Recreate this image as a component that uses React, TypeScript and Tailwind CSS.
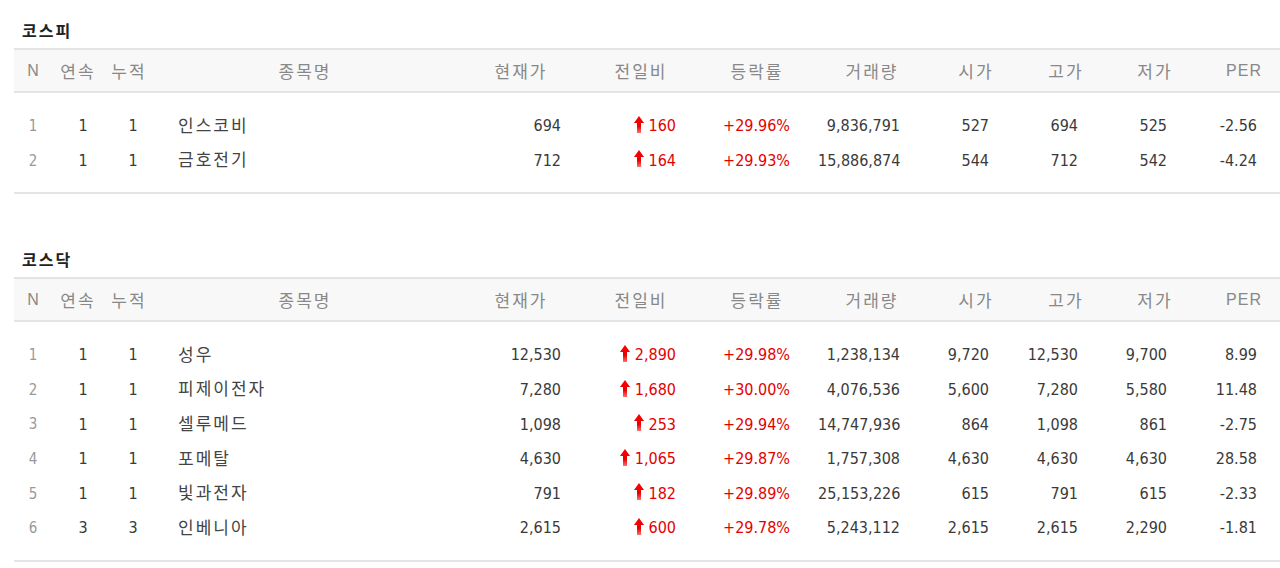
type Stock = {
  name: string;
  streak: number;
  total: number;
  price: string;
  diff: string;
  rate: string;
  volume: string;
  open: string;
  high: string;
  low: string;
  per: string;
};

const kospi: Stock[] = [
  { name: "인스코비", streak: 1, total: 1, price: "694", diff: "160", rate: "+29.96%", volume: "9,836,791", open: "527", high: "694", low: "525", per: "-2.56" },
  { name: "금호전기", streak: 1, total: 1, price: "712", diff: "164", rate: "+29.93%", volume: "15,886,874", open: "544", high: "712", low: "542", per: "-4.24" },
];

const kosdaq: Stock[] = [
  { name: "성우", streak: 1, total: 1, price: "12,530", diff: "2,890", rate: "+29.98%", volume: "1,238,134", open: "9,720", high: "12,530", low: "9,700", per: "8.99" },
  { name: "피제이전자", streak: 1, total: 1, price: "7,280", diff: "1,680", rate: "+30.00%", volume: "4,076,536", open: "5,600", high: "7,280", low: "5,580", per: "11.48" },
  { name: "셀루메드", streak: 1, total: 1, price: "1,098", diff: "253", rate: "+29.94%", volume: "14,747,936", open: "864", high: "1,098", low: "861", per: "-2.75" },
  { name: "포메탈", streak: 1, total: 1, price: "4,630", diff: "1,065", rate: "+29.87%", volume: "1,757,308", open: "4,630", high: "4,630", low: "4,630", per: "28.58" },
  { name: "빛과전자", streak: 1, total: 1, price: "791", diff: "182", rate: "+29.89%", volume: "25,153,226", open: "615", high: "791", low: "615", per: "-2.33" },
  { name: "인베니아", streak: 3, total: 3, price: "2,615", diff: "600", rate: "+29.78%", volume: "5,243,112", open: "2,615", high: "2,615", low: "2,290", per: "-1.81" },
];

const NUM = "font-['DejaVu_Sans_Condensed','DejaVu_Sans',sans-serif]";
const KOR = "font-['Noto_Sans_CJK_KR',sans-serif] tracking-[2px]";

function UpArrow() {
  return (
    <svg width="10" height="17" viewBox="0 0 10 17" className="mr-[5px] mb-[4px]">
      <defs>
        <linearGradient id="upg" x1="0" y1="0" x2="0" y2="1">
          <stop offset="0" stopColor="#ff0000" />
          <stop offset="0.6" stopColor="#e80000" />
          <stop offset="1" stopColor="#ff7070" />
        </linearGradient>
      </defs>
      <path d="M5 0 L10 7 L7 7 L7 17 L3 17 L3 7 L0 7 Z" fill="url(#upg)" />
    </svg>
  );
}

function HeaderRow() {
  return (
    <div className={`flex h-[45px] items-center border-y-2 border-[#e4e4e4] bg-[#f8f8f8] text-[17px] text-[#888] ${KOR}`}>
      <div className="w-[38px] text-center font-['Liberation_Sans',sans-serif] text-[16px] tracking-normal">N</div>
      <div className="w-[52px] text-center">연속</div>
      <div className="w-[50px] text-center">누적</div>
      <div className="w-[302px] text-center">종목명</div>
      <div className="w-[130px] text-center">현재가</div>
      <div className="w-[110px] text-center">전일비</div>
      <div className="w-[122px] text-center">등락률</div>
      <div className="w-[108px] text-center">거래량</div>
      <div className="w-[100px] text-center">시가</div>
      <div className="w-[80px] text-center">고가</div>
      <div className="w-[98px] text-center">저가</div>
      <div className="flex-1 pl-[4px] text-center font-['Liberation_Sans',sans-serif] text-[16px] tracking-[1px]">PER</div>
    </div>
  );
}

function DataRow({ n, s }: { n: number; s: Stock }) {
  return (
    <div className={`flex h-[34.6px] items-center text-[16px] text-[#3a3a3a] ${NUM}`}>
      <div className="w-[38px] text-center text-[15px] text-[#999]">{n}</div>
      <div className="w-[52px] pl-[10px] text-center">{s.streak}</div>
      <div className="w-[50px] pl-[8px] text-center">{s.total}</div>
      <div className={`mb-[4px] w-[302px] pl-[24px] text-[17px] text-[#444] ${KOR}`}>{s.name}</div>
      <div className="w-[130px] pr-[25px] text-right">{s.price}</div>
      <div className="flex w-[110px] items-center justify-end pr-[20px] text-[#e50000]">
        <UpArrow />
        {s.diff}
      </div>
      <div className="w-[122px] pr-[28px] text-right text-[#e50000]">{s.rate}</div>
      <div className="w-[108px] pr-[26px] text-right">{s.volume}</div>
      <div className="w-[100px] pr-[37px] text-right">{s.open}</div>
      <div className="w-[80px] pr-[28px] text-right">{s.high}</div>
      <div className="w-[98px] pr-[37px] text-right">{s.low}</div>
      <div className="flex-1 pr-[23px] text-right">{s.per}</div>
    </div>
  );
}

function Market({ title, rows, className }: { title: string; rows: Stock[]; className?: string }) {
  return (
    <section className={className}>
      <h2 className={`mb-[8px] h-[20px] pl-[8px] text-[16px] leading-[20px] font-bold text-[#222] ${KOR}`}>
        {title}
      </h2>
      <HeaderRow />
      <div className="border-b-2 border-[#e4e4e4] pt-[16px] pb-[14px]">
        {rows.map((s, i) => (
          <DataRow key={s.name} n={i + 1} s={s} />
        ))}
      </div>
    </section>
  );
}

export default function App() {
  return (
    <div className="min-h-[568px] w-[1280px] overflow-hidden bg-white pl-[14px] pt-[20px]">
      <Market title="코스피" rows={kospi} />
      <Market title="코스닥" rows={kosdaq} className="mt-[55px]" />
    </div>
  );
}
